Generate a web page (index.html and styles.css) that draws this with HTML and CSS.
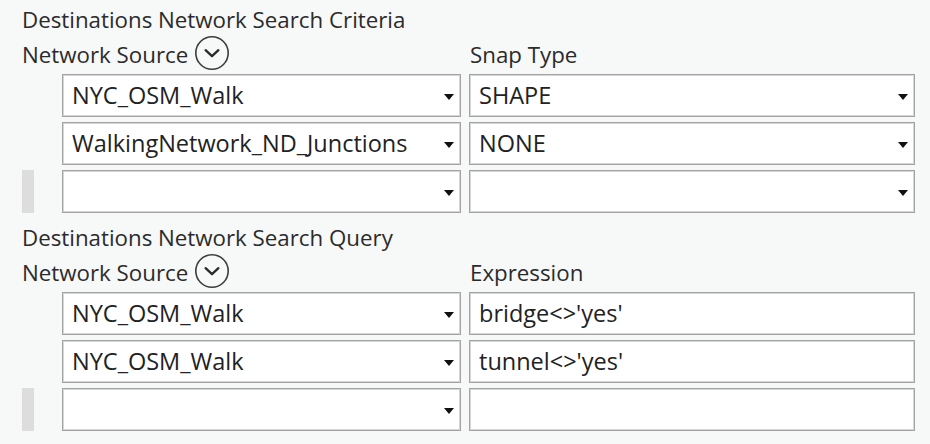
FILE: index.html
```html
<!DOCTYPE html>
<html>
<head>
<meta charset="utf-8">
<link rel="stylesheet" href="styles.css">
</head>
<body>
<div class="panel">
  <section class="section">
    <div class="title">Destinations Network Search Criteria</div>
    <div class="labels">
      <div class="label-left">Network Source
        <svg class="expand" width="36" height="36" viewBox="0 0 36 36"><circle cx="18" cy="18" r="16.2" fill="none" stroke="#3c3c3c" stroke-width="1.6"/><path d="M11.6 15.2 L18 21.2 L24.4 15.2" fill="none" stroke="#2a2a2a" stroke-width="2.3" stroke-linecap="round" stroke-linejoin="round"/></svg>
      </div>
      <div class="label-right">Snap Type</div>
    </div>
    <div class="row">
      <div class="handle"></div>
      <div class="box box-left"><span class="val">NYC_OSM_Walk</span><span class="caret"></span></div>
      <div class="box box-right"><span class="val">SHAPE</span><span class="caret"></span></div>
    </div>
    <div class="row">
      <div class="handle"></div>
      <div class="box box-left"><span class="val">WalkingNetwork_ND_Junctions</span><span class="caret"></span></div>
      <div class="box box-right"><span class="val">NONE</span><span class="caret"></span></div>
    </div>
    <div class="row">
      <div class="handle"><span class="grip"></span></div>
      <div class="box box-left"><span class="val"></span><span class="caret"></span></div>
      <div class="box box-right"><span class="val"></span><span class="caret"></span></div>
    </div>
  </section>
  <section class="section">
    <div class="title">Destinations Network Search Query</div>
    <div class="labels">
      <div class="label-left">Network Source
        <svg class="expand" width="36" height="36" viewBox="0 0 36 36"><circle cx="18" cy="18" r="16.2" fill="none" stroke="#3c3c3c" stroke-width="1.6"/><path d="M11.6 15.2 L18 21.2 L24.4 15.2" fill="none" stroke="#2a2a2a" stroke-width="2.3" stroke-linecap="round" stroke-linejoin="round"/></svg>
      </div>
      <div class="label-right">Expression</div>
    </div>
    <div class="row">
      <div class="handle"></div>
      <div class="box box-left"><span class="val">NYC_OSM_Walk</span><span class="caret"></span></div>
      <div class="box box-right"><span class="val">bridge&lt;&gt;'yes'</span></div>
    </div>
    <div class="row">
      <div class="handle"></div>
      <div class="box box-left"><span class="val">NYC_OSM_Walk</span><span class="caret"></span></div>
      <div class="box box-right"><span class="val">tunnel&lt;&gt;'yes'</span></div>
    </div>
    <div class="row">
      <div class="handle"><span class="grip"></span></div>
      <div class="box box-left"><span class="val"></span><span class="caret"></span></div>
      <div class="box box-right"><span class="val"></span></div>
    </div>
  </section>
</div>
</body>
</html>
```
FILE: styles.css
```css
html, body {
  margin: 0;
  padding: 0;
  background: #f7f8f8;
}
body {
  width: 930px;
  height: 444px;
  overflow: hidden;
  font-family: "Open Sans", "Noto Sans", sans-serif;
  font-size: 22.3px;
  color: #2b2b2b;
}
.panel {
  padding: 3px 0 0 22px;
}
.section {
  display: flex;
  flex-direction: column;
  gap: 5px;
  margin-bottom: 8px;
}
.title {
  height: 34px;
  line-height: 34px;
  margin-bottom: -5px;
  white-space: nowrap;
}
.labels {
  display: flex;
  height: 34px;
  line-height: 34px;
  margin-top: 1px;
  margin-bottom: -3px;
}
.label-left {
  width: 447px;
  display: flex;
  align-items: center;
  white-space: nowrap;
}
.expand {
  margin-left: 6px;
  margin-top: -4px;
  flex: none;
}
.label-right {
  padding-left: 1px;
}
.row {
  display: flex;
  height: 43px;
}
.handle {
  width: 40px;
  flex: none;
}
.grip {
  display: block;
  width: 12px;
  height: 43px;
  background: #dddddd;
}
.box {
  box-sizing: border-box;
  height: 43px;
  border: 1px solid #a3a3a3;
  box-shadow: inset 0 0 0 1px #d6d6d6;
  background: #ffffff;
  display: flex;
  align-items: center;
  padding: 0 6px 0 9px;
  color: #222222;
  font-size: 23.5px;
}
.box-left {
  width: 399px;
  margin-right: 8px;
}
.box-right {
  width: 446px;
}
.val {
  flex: 1;
  line-height: 41px;
  white-space: nowrap;
  overflow: hidden;
}
.caret {
  flex: none;
  width: 0;
  height: 0;
  border-left: 5px solid transparent;
  border-right: 5px solid transparent;
  border-top: 6px solid #111111;
  margin-top: 3px;
}
```
